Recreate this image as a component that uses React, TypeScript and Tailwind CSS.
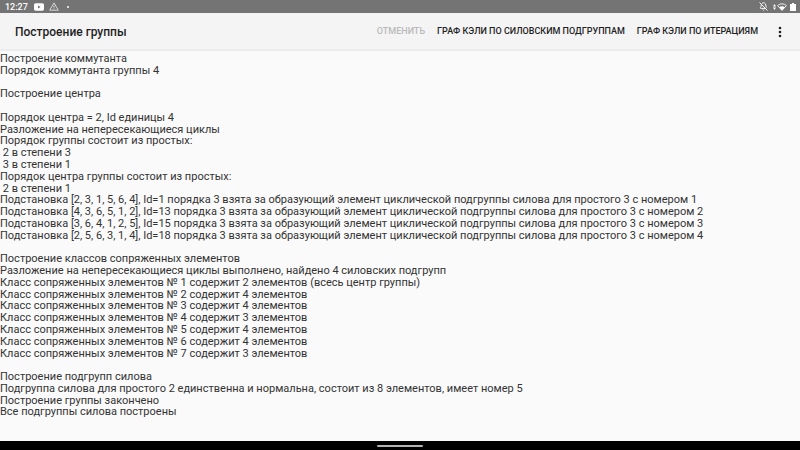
import { BellOff } from "lucide-react";

const LOG_LINES = [
  "Построение коммутанта",
  "Порядок коммутанта группы 4",
  "",
  "Построение центра",
  "",
  "Порядок центра = 2, Id единицы 4",
  "Разложение на непересекающиеся циклы",
  "Порядок группы состоит из простых:",
  " 2 в степени 3",
  " 3 в степени 1",
  "Порядок центра группы состоит из простых:",
  " 2 в степени 1",
  "Подстановка [2, 3, 1, 5, 6, 4], Id=1 порядка 3 взята за образующий элемент циклической подгруппы силова для простого 3 с номером 1",
  "Подстановка [4, 3, 6, 5, 1, 2], Id=13 порядка 3 взята за образующий элемент циклической подгруппы силова для простого 3 с номером 2",
  "Подстановка [3, 6, 4, 1, 2, 5], Id=15 порядка 3 взята за образующий элемент циклической подгруппы силова для простого 3 с номером 3",
  "Подстановка [2, 5, 6, 3, 1, 4], Id=18 порядка 3 взята за образующий элемент циклической подгруппы силова для простого 3 с номером 4",
  "",
  "Построение классов сопряженных элементов",
  "Разложение на непересекающиеся циклы выполнено, найдено 4 силовских подгрупп",
  "Класс сопряженных элементов № 1 содержит 2 элементов (всесь центр группы)",
  "Класс сопряженных элементов № 2 содержит 4 элементов",
  "Класс сопряженных элементов № 3 содержит 4 элементов",
  "Класс сопряженных элементов № 4 содержит 3 элементов",
  "Класс сопряженных элементов № 5 содержит 4 элементов",
  "Класс сопряженных элементов № 6 содержит 4 элементов",
  "Класс сопряженных элементов № 7 содержит 3 элементов",
  "",
  "Построение подгрупп силова",
  "Подгруппа силова для простого 2 единственна и нормальна, состоит из 8 элементов, имеет номер 5",
  "Построение группы закончено",
  "Все подгруппы силова построены",
];

function StatusBar() {
  return (
    <div className="flex h-[13px] shrink-0 items-center bg-[#747474] pl-[5px] pr-1 text-white">
      <span className="text-[9px] leading-3 font-medium">12:27</span>
      <svg viewBox="0 0 10 8" className="ml-[6px] h-2 w-[10px]">
        <rect width="10" height="7.4" y="0.3" rx="1.6" fill="#fff" />
        <path d="M4 2.4 6.6 4 4 5.6z" fill="#747474" />
      </svg>
      <svg viewBox="0 0 10 9" className="ml-[5px] h-[9px] w-[10px]" fill="none" stroke="#e4e4e4" strokeWidth="0.9">
        <path d="M5 .9 9.3 8.2H.7z" />
        <path d="M5 3.5v2.2M5 6.4v.9" />
      </svg>
      <span className="ml-2 size-[2px] rounded-full bg-white" />

      <div className="ml-auto flex items-center">
        <BellOff className="size-[9px]" strokeWidth={2.4} />
        <svg viewBox="0 0 3 6" className="ml-[5px] h-[6px] w-[3px]" fill="#fff">
          <path d="M1.5 0 3 2.4H0zM1.5 6 3 3.6H0z" />
        </svg>
        <svg viewBox="0 0 10 8" className="ml-px h-2 w-[10px]">
          <path d="M.6 2.6C3.2.3 6.8.3 9.4 2.6L5 7.4z" fill="none" stroke="#fff" strokeWidth="0.9" />
          <path d="M2.2 4.2c1.6-1.4 4-1.4 5.6 0L5 7.4z" fill="#fff" />
        </svg>
        <svg viewBox="0 0 6 8" className="ml-[3px] h-2 w-[6px]" fill="#fff">
          <path d="M2 0h2v1h1.4q.6 0 .6.6v5.8q0 .6-.6.6H.6Q0 8 0 7.4V1.6Q0 1 .6 1H2z" />
        </svg>
      </div>
    </div>
  );
}

function Toolbar() {
  return (
    <header className="flex h-[38px] shrink-0 items-center border-b-2 border-[#ececec] bg-[#f4f4f4] pt-[2px] pl-[15px] pr-[10px] text-[#1f1f1f]">
      <h1 className="text-[12px] font-medium">Построение группы</h1>
      <nav className="ml-auto flex items-center gap-3 text-[9px] font-medium">
        <button className="uppercase text-[#b9b9b9]" disabled>
          Отменить
        </button>
        <button className="uppercase">Граф Кэли по силовским подгруппам</button>
        <button className="uppercase">Граф Кэли по итерациям</button>
        <button className="flex w-5 justify-center" aria-label="Ещё">
          <svg viewBox="0 0 4 12" className="h-3 w-1" fill="#1f1f1f">
            <circle cx="2" cy="2" r="1.3" />
            <circle cx="2" cy="6" r="1.3" />
            <circle cx="2" cy="10" r="1.3" />
          </svg>
        </button>
      </nav>
    </header>
  );
}

export default function App() {
  return (
    <div className="flex h-screen flex-col bg-[#fafafa] font-['Roboto',sans-serif]">
      <StatusBar />
      <Toolbar />

      {/* Log output */}
      <main className="flex flex-1 flex-col pt-[2px] pb-[23px] text-[11px] leading-[11px] text-[#333]">
        {LOG_LINES.map((line, i) => (
          <p key={i} className="flex-1 whitespace-pre">
            {line}
          </p>
        ))}
      </main>

      {/* Gesture bar */}
      <footer className="flex h-[9px] shrink-0 items-center justify-center bg-black">
        <span className="h-[2px] w-[46px] rounded-full bg-[#b4b4b4]" />
      </footer>
    </div>
  );
}
